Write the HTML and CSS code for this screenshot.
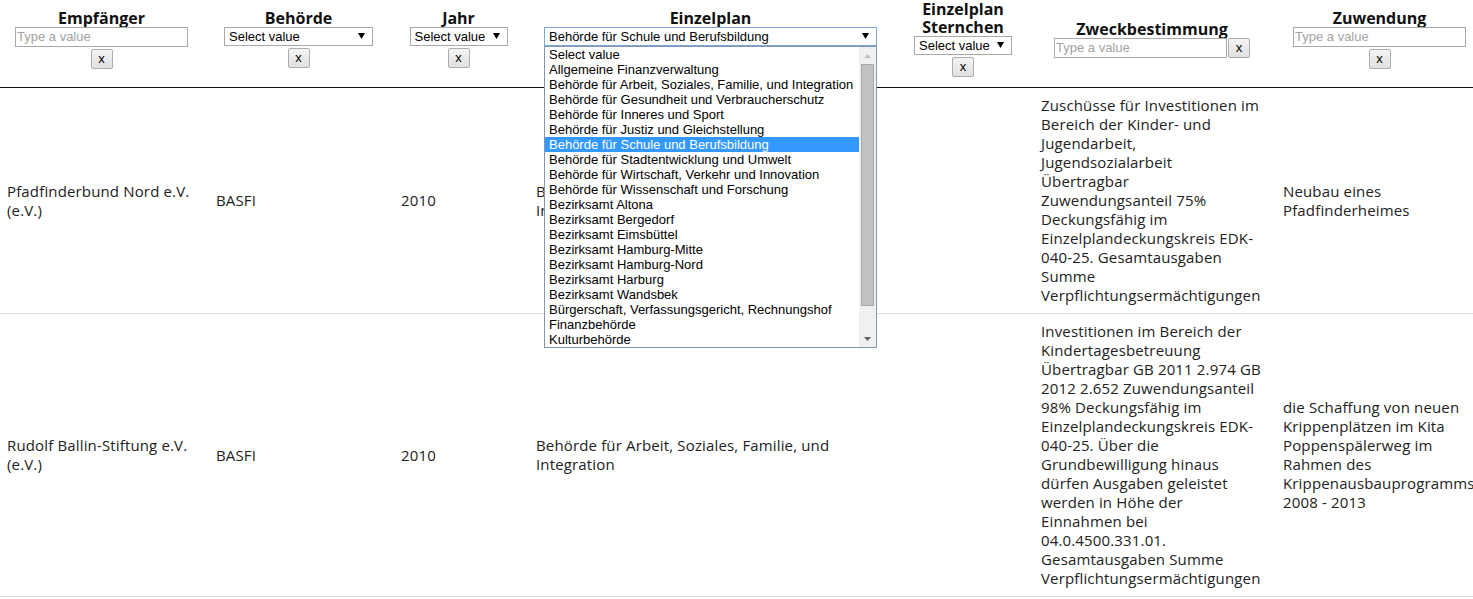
FILE: index.html
```html
<!DOCTYPE html>
<html lang="de">
<head>
<meta charset="utf-8">
<title>Zuwendungen</title>
<link rel="stylesheet" href="styles.css">
</head>
<body>
<div class="wrap">
<table class="grid">
  <colgroup>
    <col class="c1"><col class="c2"><col class="c3"><col class="c4"><col class="c5"><col class="c6"><col class="c7">
  </colgroup>
  <thead>
    <tr>
      <th>
        <div class="ttl">Empfänger</div>
        <div class="ctl"><input class="txt" type="text" placeholder="Type a value"><button class="clr">x</button></div>
      </th>
      <th>
        <div class="ttl">Behörde</div>
        <div class="ctl"><span class="sel s-beh"><select><option>Select value</option></select><svg class="arr" width="7" height="6" viewBox="0 0 7 6"><path d="M0 0h7L3.5 6z"/></svg></span><button class="clr">x</button></div>
      </th>
      <th>
        <div class="ttl">Jahr</div>
        <div class="ctl"><span class="sel s-sm"><select><option>Select value</option></select><svg class="arr" width="7" height="6" viewBox="0 0 7 6"><path d="M0 0h7L3.5 6z"/></svg></span><button class="clr">x</button></div>
      </th>
      <th>
        <div class="ttl">Einzelplan</div>
        <div class="ctl">
          <span class="sel s-ep open"><select><option>Behörde für Schule und Berufsbildung</option></select><svg class="arr" width="7" height="6" viewBox="0 0 7 6"><path d="M0 0h7L3.5 6z"/></svg>
            <div class="listbox">
              <ul class="opts">
                <li>Select value</li>
                <li>Allgemeine Finanzverwaltung</li>
                <li>Behörde für Arbeit, Soziales, Familie, und Integration</li>
                <li>Behörde für Gesundheit und Verbraucherschutz</li>
                <li>Behörde für Inneres und Sport</li>
                <li>Behörde für Justiz und Gleichstellung</li>
                <li class="hl">Behörde für Schule und Berufsbildung</li>
                <li>Behörde für Stadtentwicklung und Umwelt</li>
                <li>Behörde für Wirtschaft, Verkehr und Innovation</li>
                <li>Behörde für Wissenschaft und Forschung</li>
                <li>Bezirksamt Altona</li>
                <li>Bezirksamt Bergedorf</li>
                <li>Bezirksamt Eimsbüttel</li>
                <li>Bezirksamt Hamburg-Mitte</li>
                <li>Bezirksamt Hamburg-Nord</li>
                <li>Bezirksamt Harburg</li>
                <li>Bezirksamt Wandsbek</li>
                <li>Bürgerschaft, Verfassungsgericht, Rechnungshof</li>
                <li>Finanzbehörde</li>
                <li>Kulturbehörde</li>
              </ul>
              <div class="sbar">
                <div class="sbtn"><svg width="7" height="4" viewBox="0 0 7 4"><path class="up" d="M0 4L3.5 0L7 4z"/></svg></div>
                <div class="strack"><div class="thumb"></div></div>
                <div class="sbtn"><svg width="7" height="4" viewBox="0 0 7 4"><path class="down" d="M0 0h7L3.5 4z"/></svg></div>
              </div>
            </div>
          </span><button class="clr">x</button>
        </div>
      </th>
      <th>
        <div class="ttl">Einzelplan Sternchen</div>
        <div class="ctl"><span class="sel s-sm"><select><option>Select value</option></select><svg class="arr" width="7" height="6" viewBox="0 0 7 6"><path d="M0 0h7L3.5 6z"/></svg></span><button class="clr">x</button></div>
      </th>
      <th>
        <div class="ttl">Zweckbestimmung</div>
        <div class="ctl"><input class="txt" type="text" placeholder="Type a value"><button class="clr">x</button></div>
      </th>
      <th>
        <div class="ttl">Zuwendung</div>
        <div class="ctl"><input class="txt" type="text" placeholder="Type a value"><button class="clr">x</button></div>
      </th>
    </tr>
  </thead>
  <tbody>
    <tr>
      <td>Pfadfinderbund Nord e.V. (e.V.)</td>
      <td>BASFI</td>
      <td>2010</td>
      <td>Behörde für Arbeit, Soziales, Familie, und Integration</td>
      <td></td>
      <td class="zweck">Zuschüsse für Investitionen im Bereich der Kinder- und Jugendarbeit, Jugendsozialarbeit Übertragbar Zuwendungsanteil 75% Deckungsfähig im Einzelplandeckungskreis EDK-040-25. Gesamtausgaben Summe Verpflichtungsermächtigungen</td>
      <td>Neubau eines Pfadfinderheimes</td>
    </tr>
    <tr>
      <td>Rudolf Ballin-Stiftung e.V. (e.V.)</td>
      <td>BASFI</td>
      <td>2010</td>
      <td>Behörde für Arbeit, Soziales, Familie, und Integration</td>
      <td></td>
      <td class="zweck">Investitionen im Bereich der Kindertagesbetreuung Übertragbar GB 2011 2.974 GB 2012 2.652 Zuwendungsanteil 98% Deckungsfähig im Einzelplandeckungskreis EDK-040-25. Über die Grundbewilligung hinaus dürfen Ausgaben geleistet werden in Höhe der Einnahmen bei 04.0.4500.331.01. Gesamtausgaben Summe Verpflichtungsermächtigungen</td>
      <td>die Schaffung von neuen Krippenplätzen im Kita Poppenspälerweg im Rahmen des Krippenausbauprogramms 2008 - 2013</td>
    </tr>
  </tbody>
</table>
</div>
</body>
</html>
```

FILE: styles.css
```css
html, body {
  margin: 0;
  padding: 0;
  overflow: hidden;
  background: #fff;
}
body {
  font-family: "Open Sans", "DejaVu Sans", sans-serif;
  color: #222;
}
.wrap {
  margin-left: -3px;
}
.grid {
  width: 1489px;
  table-layout: fixed;
  border-collapse: collapse;
}
.c1 { width: 209px; }
.c2 { width: 185px; }
.c3 { width: 135px; }
.c4 { width: 369px; }
.c5 { width: 136px; }
.c6 { width: 242px; }
.c7 { width: 213px; }

.grid th {
  padding: 0 10px 10px;
  vertical-align: middle;
  text-align: center;
  font-weight: normal;
  border-bottom: 1px solid #111;
}
.ttl {
  font-weight: 700;
  font-size: 16px;
  line-height: 18px;
  color: #111;
}
.ctl {
  display: flex;
  flex-wrap: wrap;
  justify-content: center;
  gap: 2px 1px;
}
.txt {
  width: 173px;
  height: 20px;
  box-sizing: border-box;
  margin: 0;
  padding: 0 1px;
  border: 1px solid #a9a9a9;
  font: 13px "Liberation Sans", Arial, sans-serif;
  color: #000;
  background: #fff;
  outline: none;
}
.txt::placeholder {
  color: #a3a3a3;
}
.clr {
  width: 22px;
  height: 20px;
  box-sizing: border-box;
  margin: 0;
  padding: 0;
  border: 1px solid #adadad;
  border-radius: 2px;
  background: linear-gradient(#f4f4f4, #e1e1e1);
  font: 13px "Liberation Sans", Arial, sans-serif;
  line-height: 16px;
  color: #000;
}
.sel {
  position: relative;
  display: inline-block;
  height: 19px;
}
.s-beh { width: 149px; }
.s-sm { width: 98px; }
.s-ep { width: 333px; }
.sel select {
  display: block;
  width: 100%;
  height: 19px;
  box-sizing: border-box;
  margin: 0;
  padding: 0 16px 0 4px;
  border: 1px solid #a9a9a9;
  border-radius: 0;
  background: #fff;
  -webkit-appearance: none;
  appearance: none;
  font: 13px "Liberation Sans", Arial, sans-serif;
  line-height: 17px;
  color: #000;
  text-align: left;
}
.sel.open select {
  border-color: #7fa6d8;
}
.arr {
  position: absolute;
  right: 8px;
  top: 6px;
  fill: #000;
}

.listbox {
  position: absolute;
  top: 100%;
  left: 0;
  width: 100%;
  box-sizing: border-box;
  z-index: 10;
  display: flex;
  border: 1px solid #8295b2;
  background: #fff;
  text-align: left;
}
.opts {
  flex: 1;
  margin: 0;
  padding: 0;
  list-style: none;
  font: 13px "Liberation Sans", Arial, sans-serif;
  color: #000;
}
.opts li {
  height: 15px;
  line-height: 15px;
  padding-left: 4px;
  white-space: nowrap;
}
.opts li.hl {
  background: #3399ff;
  color: #fff;
}
.sbar {
  width: 17px;
  display: flex;
  flex-direction: column;
  background: #f0f0f0;
}
.sbtn {
  height: 17px;
  display: flex;
  align-items: center;
  justify-content: center;
}
.up { fill: #c2c2c2; }
.down { fill: #606060; }
.strack {
  flex: 1;
  padding: 0 2px;
  display: flex;
  flex-direction: column;
}
.thumb {
  height: 242px;
  box-sizing: border-box;
  border: 1px solid #a8a8a8;
  background: #c1c1c1;
}

.grid td {
  padding: 8px 10px;
  vertical-align: middle;
  font-size: 15px;
  line-height: 19px;
  letter-spacing: 0.15px;
  color: #222;
  border-bottom: 1px solid #ddd;
  overflow: visible;
}
.grid td.zweck {
  padding-right: 11px;
}
```
